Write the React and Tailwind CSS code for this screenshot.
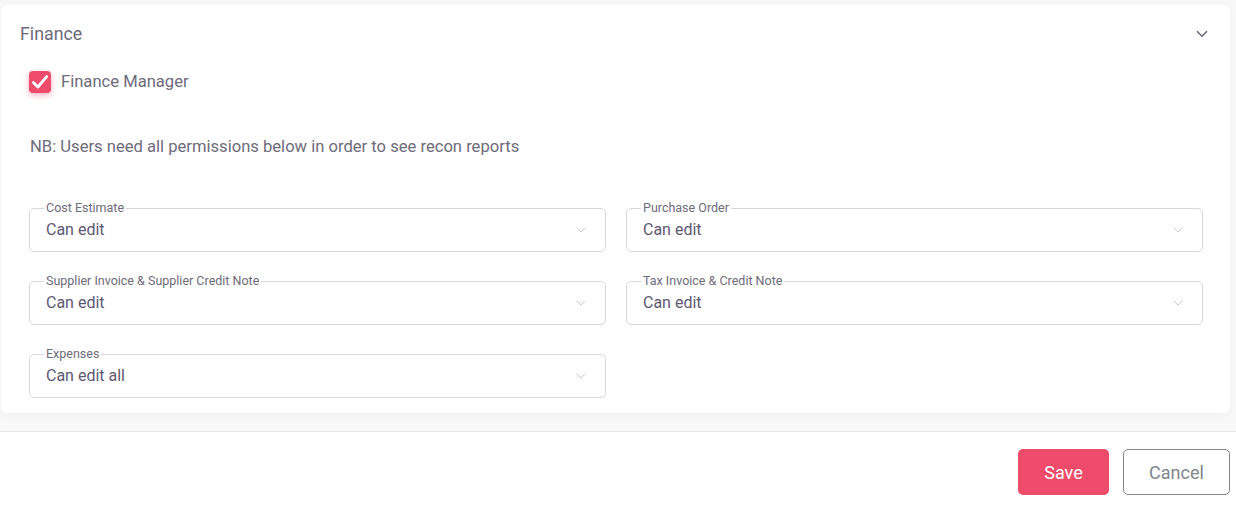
import React from "react";

const font = { fontFamily: "Roboto, 'Liberation Sans', sans-serif" };

function Chevron({ className, strokeWidth = 2 }) {
  return (
    <svg className={className} viewBox="0 0 24 24" fill="none" stroke="currentColor" strokeWidth={strokeWidth} strokeLinecap="round" strokeLinejoin="round">
      <polyline points="6 9 12 15 18 9" />
    </svg>
  );
}

function SelectField({ label, value }) {
  return (
    <fieldset className="border border-[#d8d6de] rounded-[5px] pl-4 pr-4 pb-[11px] min-w-0">
      <legend className="text-[12.5px] leading-[14px] px-[2px] -ml-[2px] text-[#6e6b7b]">{label}</legend>
      <div className="mt-[5px] flex items-center justify-between">
        <span className="text-[16px] leading-5 text-[#5e5873]">{value}</span>
        <Chevron className="w-[16px] h-[16px] text-[#c9c8cf]" strokeWidth={1.5} />
      </div>
    </fieldset>
  );
}

export default function App() {
  return (
    <div style={font} className="w-[1236px] h-[516px] bg-white overflow-hidden">
      <div className="bg-[#f8f8f8] pt-[5px] pl-[1px] pr-[6px] pb-[18px] border-b border-[#e6e5ea]">
        <div className="bg-white rounded-[6px] shadow-[0_2px_8px_rgba(0,0,0,0.03)] pb-[15px]">
          <div className="flex items-center justify-between pl-[19px] pr-[19px] pt-[18px]">
            <span className="text-[17.8px] leading-[22px] text-[#6e6b7b]">Finance</span>
            <Chevron className="w-[18px] h-[18px] text-[#6e6b7b]" strokeWidth={2.2} />
          </div>
          <div className="flex items-center pl-[28px] mt-[26px]">
            <span className="w-[22px] h-[22px] rounded-[4px] bg-[#ee4c6a] flex items-center justify-center shadow-[0_2px_6px_rgba(238,76,106,0.45)]">
              <svg viewBox="0 0 24 24" className="w-[20px] h-[20px]" fill="none" stroke="white" strokeWidth="3.4" strokeLinecap="round" strokeLinejoin="round">
                <polyline points="4 12.5 9.5 18 20 5.5" />
              </svg>
            </span>
            <span className="ml-[10px] text-[16.6px] leading-5 text-[#6e6b7b]">Finance Manager</span>
          </div>
          <div className="pl-[29px] mt-[44px] text-[16.6px] leading-5 text-[#6e6b7b]">
            NB: Users need all permissions below in order to see recon reports
          </div>
          <div className="grid grid-cols-2 gap-x-[20px] gap-y-[22px] pl-[28px] pr-[27px] mt-[44px]">
            <SelectField label="Cost Estimate" value="Can edit" />
            <SelectField label="Purchase Order" value="Can edit" />
            <SelectField label="Supplier Invoice & Supplier Credit Note" value="Can edit" />
            <SelectField label="Tax Invoice & Credit Note" value="Can edit" />
            <SelectField label="Expenses" value="Can edit all" />
          </div>
        </div>
      </div>
      <div className="flex justify-end gap-[14px] pt-[17px] pr-[6px]">
        <button className="w-[91px] h-[46px] rounded-[5px] bg-[#ee4c6a] text-white text-[18px]">Save</button>
        <button className="w-[107px] h-[46px] rounded-[5px] border border-[#82868b] text-[#82868b] text-[18px] bg-white">Cancel</button>
      </div>
    </div>
  );
}
